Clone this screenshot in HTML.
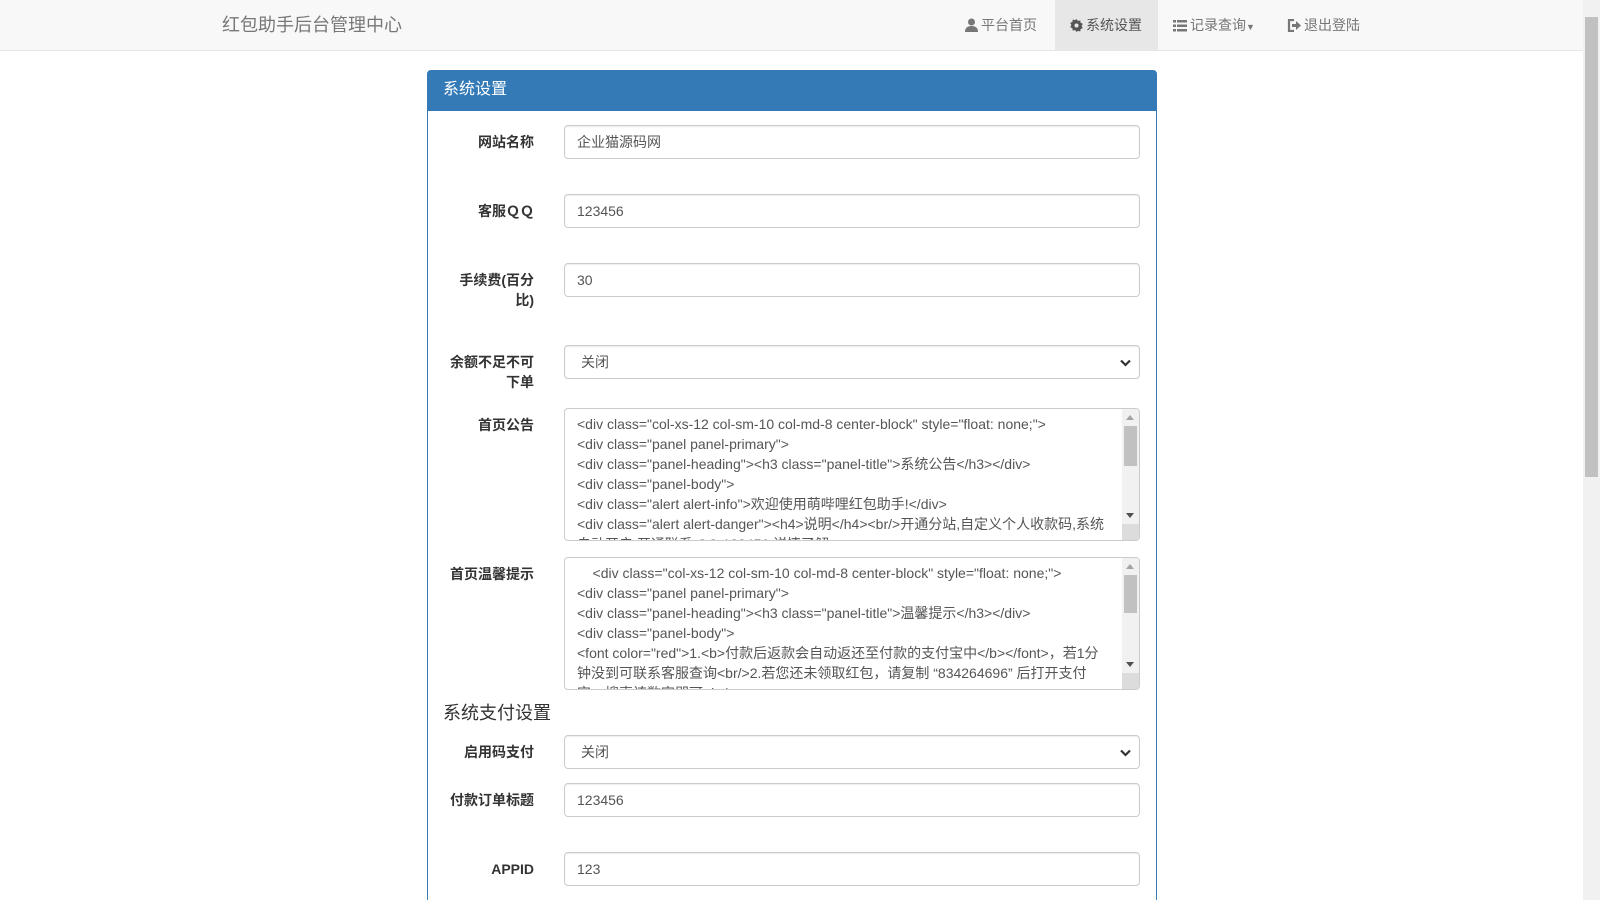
<!DOCTYPE html>
<html style="overflow:hidden;height:900px"><head><meta charset="utf-8"><style>
*{box-sizing:border-box;margin:0;padding:0}
body{width:1600px;height:900px;overflow:hidden;background:#fff;font-family:"Liberation Sans","Noto Sans CJK SC",sans-serif;font-size:14px;color:#333;position:relative}
.nav{position:absolute;left:0;top:0;width:1583px;height:51px;background:#f8f8f8;border-bottom:1px solid #e7e7e7}
.brand{position:absolute;left:222px;top:13px;font-size:18px;color:#777;line-height:24px}
.ni{position:absolute;top:0;height:50px;line-height:50px;color:#777;font-size:14px;padding:0 15px}
.ni.act{background:#e7e7e7;color:#555}
.ni svg{vertical-align:-2px;margin-right:3px}
.panel{position:absolute;left:427px;top:70px;width:730px;height:850px;border:1px solid #337ab7;border-radius:4px}
.ph{background:#337ab7;color:#fff;height:40px;line-height:38px;padding-left:15px;font-size:16px}
.lb{position:absolute;right:1066px;font-weight:bold;text-align:right;line-height:20px;width:100px}
.in{position:absolute;left:564px;width:576px;height:34px;border:1px solid #ccc;border-radius:4px;padding:6px 12px;line-height:20px;color:#555;box-shadow:inset 0 1px 1px rgba(0,0,0,.075);background:#fff}
.sel{padding-left:16px}
.sel svg{position:absolute;right:8px;top:13px}
.ta{position:absolute;left:564px;width:576px;border:1px solid #ccc;border-radius:4px;padding:5px 28px 6px 12px;line-height:20px;color:#555;overflow:hidden;white-space:nowrap;background:#fff}
.sb{position:absolute;right:0;top:0;bottom:0;width:17px;background:#f1f1f1}
.sb .th{position:absolute;left:2px;right:2px;background:#c1c1c1}
.sb .up,.sb .dn{position:absolute;left:4px;width:0;height:0;border-left:4px solid transparent;border-right:4px solid transparent}
.sb .up{top:6px;border-bottom:5px solid #a3a3a3}
.sb .dn{bottom:22px;border-top:5px solid #505050}
.sb .gr{position:absolute;left:0;right:0;bottom:0;height:16px;background:#dcdcdc}
.h4{position:absolute;left:443px;top:701px;font-size:18px;color:#333;line-height:24px}
.vs{position:absolute;left:1583px;top:0;width:17px;height:900px;background:#f1f1f1}
</style></head><body>
<div class="nav">
<div class="brand">红包助手后台管理中心</div>
<div class="ni" style="left:950px"><svg width="13" height="14" viewBox="0 0 13 14"><circle cx="6.5" cy="4" r="3.5" fill="#777"/><path d="M0 14 Q0 8 6.5 8 Q13 8 13 14Z" fill="#777"/></svg>平台首页</div>
<div class="ni act" style="left:1055px;width:103px"><svg width="13" height="13" viewBox="0 0 14 14"><path d="M7 0l1.5 2.2 2.6-.7.3 2.6 2.4 1.1-1.3 2.3 1.3 2.3-2.4 1.1-.3 2.6-2.6-.7L7 14l-1.5-2.2-2.6.7-.3-2.6L.2 8.8 1.5 6.5.2 4.2l2.4-1.1.3-2.6 2.6.7z" fill="#555"/><circle cx="7" cy="7" r="2.2" fill="#e7e7e7"/></svg>系统设置</div>
<div class="ni" style="left:1158px"><svg width="14" height="12" viewBox="0 0 14 12"><g fill="#777"><rect x="0" y="0" width="3" height="2.5"/><rect x="4" y="0" width="10" height="2.5"/><rect x="0" y="4.5" width="3" height="2.5"/><rect x="4" y="4.5" width="10" height="2.5"/><rect x="0" y="9" width="3" height="2.5"/><rect x="4" y="9" width="10" height="2.5"/></g></svg>记录查询<span style="font-size:9px">▼</span></div>
<div class="ni" style="left:1272px"><svg width="14" height="13" viewBox="0 0 14 13"><path d="M7 1H2v11h5" stroke="#777" stroke-width="2.2" fill="none"/><path d="M5 5h4V2l5 4.5L9 11V8H5z" fill="#777"/></svg>退出登陆</div>
</div>
<div class="panel"><div class="ph">系统设置</div></div>

<div class="lb" style="top:132px">网站名称</div>
<div class="in" style="top:125px">企业猫源码网</div>
<div class="lb" style="top:201px">客服ＱＱ</div>
<div class="in" style="top:194px">123456</div>
<div class="lb" style="top:270px">手续费(百分<br>比)</div>
<div class="in" style="top:263px">30</div>
<div class="lb" style="top:352px">余额不足不可<br>下单</div>
<div class="in sel" style="top:345px">关闭<svg width="11" height="8" viewBox="0 0 11 8"><path d="M1 1.5l4.5 4.5L10 1.5" stroke="#333" stroke-width="2.2" fill="none"/></svg></div>
<div class="lb" style="top:415px">首页公告</div>
<div class="ta" style="top:408px;height:133px">&lt;div class="col-xs-12 col-sm-10 col-md-8 center-block" style="float: none;"&gt;<br>&lt;div class="panel panel-primary"&gt;<br>&lt;div class="panel-heading"&gt;&lt;h3 class="panel-title"&gt;系统公告&lt;/h3&gt;&lt;/div&gt;<br>&lt;div class="panel-body"&gt;<br>&lt;div class="alert alert-info"&gt;欢迎使用萌哔哩红包助手!&lt;/div&gt;<br>&lt;div class="alert alert-danger"&gt;&lt;h4&gt;说明&lt;/h4&gt;&lt;br/&gt;开通分站,自定义个人收款码,系统<br>自动开启,开通联系 QQ:123456 详情了解
<div class="sb"><div class="up"></div><div class="th" style="top:17px;height:40px"></div><div class="dn"></div><div class="gr"></div></div></div>
<div class="lb" style="top:564px">首页温馨提示</div>
<div class="ta" style="top:557px;height:133px">&nbsp;&nbsp;&nbsp;&nbsp;&lt;div class="col-xs-12 col-sm-10 col-md-8 center-block" style="float: none;"&gt;<br>&lt;div class="panel panel-primary"&gt;<br>&lt;div class="panel-heading"&gt;&lt;h3 class="panel-title"&gt;温馨提示&lt;/h3&gt;&lt;/div&gt;<br>&lt;div class="panel-body"&gt;<br>&lt;font color="red"&gt;1.&lt;b&gt;付款后返款会自动返还至付款的支付宝中&lt;/b&gt;&lt;/font&gt;，若1分<br>钟没到可联系客服查询&lt;br/&gt;2.若您还未领取红包，请复制 “834264696” 后打开支付<br>宝，搜索该数字即可&lt;br/&gt;
<div class="sb"><div class="up"></div><div class="th" style="top:17px;height:38px"></div><div class="dn"></div><div class="gr"></div></div></div>
<div class="h4">系统支付设置</div>
<div class="lb" style="top:742px">启用码支付</div>
<div class="in sel" style="top:735px">关闭<svg width="11" height="8" viewBox="0 0 11 8"><path d="M1 1.5l4.5 4.5L10 1.5" stroke="#333" stroke-width="2.2" fill="none"/></svg></div>
<div class="lb" style="top:790px">付款订单标题</div>
<div class="in" style="top:783px">123456</div>
<div class="lb" style="top:859px">APPID</div>
<div class="in" style="top:852px">123</div>
<div class="vs"><div style="position:absolute;left:2px;right:2px;top:17px;height:460px;background:#c1c1c1"></div></div>
</body></html>
